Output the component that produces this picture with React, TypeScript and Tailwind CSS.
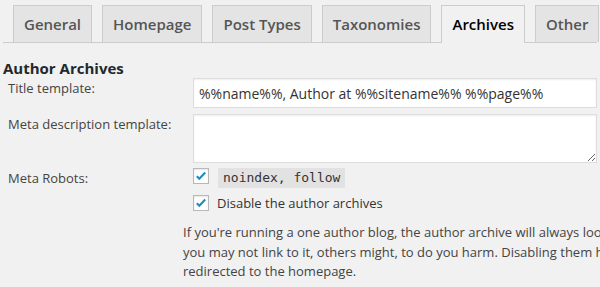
import React from 'react';

const tabs = ['General', 'Homepage', 'Post Types', 'Taxonomies', 'Archives', 'Other'];

function Check() {
  return (
    <span className="flex h-4 w-4 shrink-0 items-center justify-center border border-[#b4b9be] bg-white shadow-[inset_0_1px_2px_rgba(0,0,0,0.1)]">
      <svg viewBox="0 0 16 16" className="h-4 w-4">
        <path d="M3.2 8.2l2.9 3 6.7-7.2" fill="none" stroke="#1e8cbe" strokeWidth="2.4" />
      </svg>
    </span>
  );
}

export default function App() {
  return (
    <div className="h-[287px] w-[600px] overflow-hidden bg-[#f1f1f1] px-[3px] font-['Open_Sans',sans-serif] text-[#444]">
      {/* tabs */}
      <div className="flex gap-[10px] border-b border-[#ccc] pl-[10px] pt-[5px]">
        {tabs.map((t) => {
          const active = t === 'Archives';
          return (
            <div
              key={t}
              className={
                active
                  ? '-mb-px shrink-0 whitespace-nowrap border border-b-0 border-[#ccc] bg-[#f1f1f1] px-[10px] pb-[7px] pt-[6px] text-[15px] font-semibold leading-[24px] text-black'
                  : 'shrink-0 whitespace-nowrap border border-b-0 border-[#ccc] bg-[#e4e4e4] px-[10px] py-[6px] text-[15px] font-semibold leading-[24px] text-[#555]'
              }
            >
              {t}
            </div>
          );
        })}
      </div>

      <h3 className="mt-[15px] text-[15px] font-bold leading-[20px] text-[#23282d]">Author Archives</h3>

      <div className="flex flex-col pl-[5px] text-[13px]">
        <div className="flex">
          <label className="w-[185px] shrink-0 leading-[20px]">Title template:</label>
          <input
            readOnly
            value="%%name%%, Author at %%sitename%% %%page%%"
            className="h-[30px] w-[404px] shrink-0 border border-[#ddd] bg-white px-[5px] text-[14px] text-[#333] shadow-[inset_0_1px_2px_rgba(0,0,0,0.07)] outline-none"
          />
        </div>
        <div className="mt-[6px] flex">
          <label className="w-[185px] shrink-0 leading-[20px]">Meta description template:</label>
          <textarea
            readOnly
            className="h-[49px] w-[404px] shrink-0 border border-[#ddd] bg-white shadow-[inset_0_1px_2px_rgba(0,0,0,0.07)] outline-none"
          />
        </div>
        <div className="mt-[5px] flex">
          <label className="w-[185px] shrink-0 leading-[20px]">Meta Robots:</label>
          <div className="flex flex-col">
            <div className="flex items-start gap-[9px]">
              <Check />
              <code className="bg-[#e2e2e2] px-[5px] font-['DejaVu_Sans_Mono',monospace] text-[13px] leading-[20px] text-[#333]">
                noindex, follow
              </code>
            </div>
            <div className="mt-[5px] flex items-center gap-[8px]">
              <Check />
              <span className="leading-[20px] text-[#333]">Disable the author archives</span>
            </div>
          </div>
        </div>
        <p className="ml-[175px] mt-[10px] whitespace-nowrap leading-[19.5px] text-[#444]">
          If you're running a one author blog, the author archive will always look exactly the same as your homepage. And even though
          <br />
          you may not link to it, others might, to do you harm. Disabling them here will make sure any link to those archives will be 301
          <br />
          redirected to the homepage.
        </p>
      </div>
    </div>
  );
}
